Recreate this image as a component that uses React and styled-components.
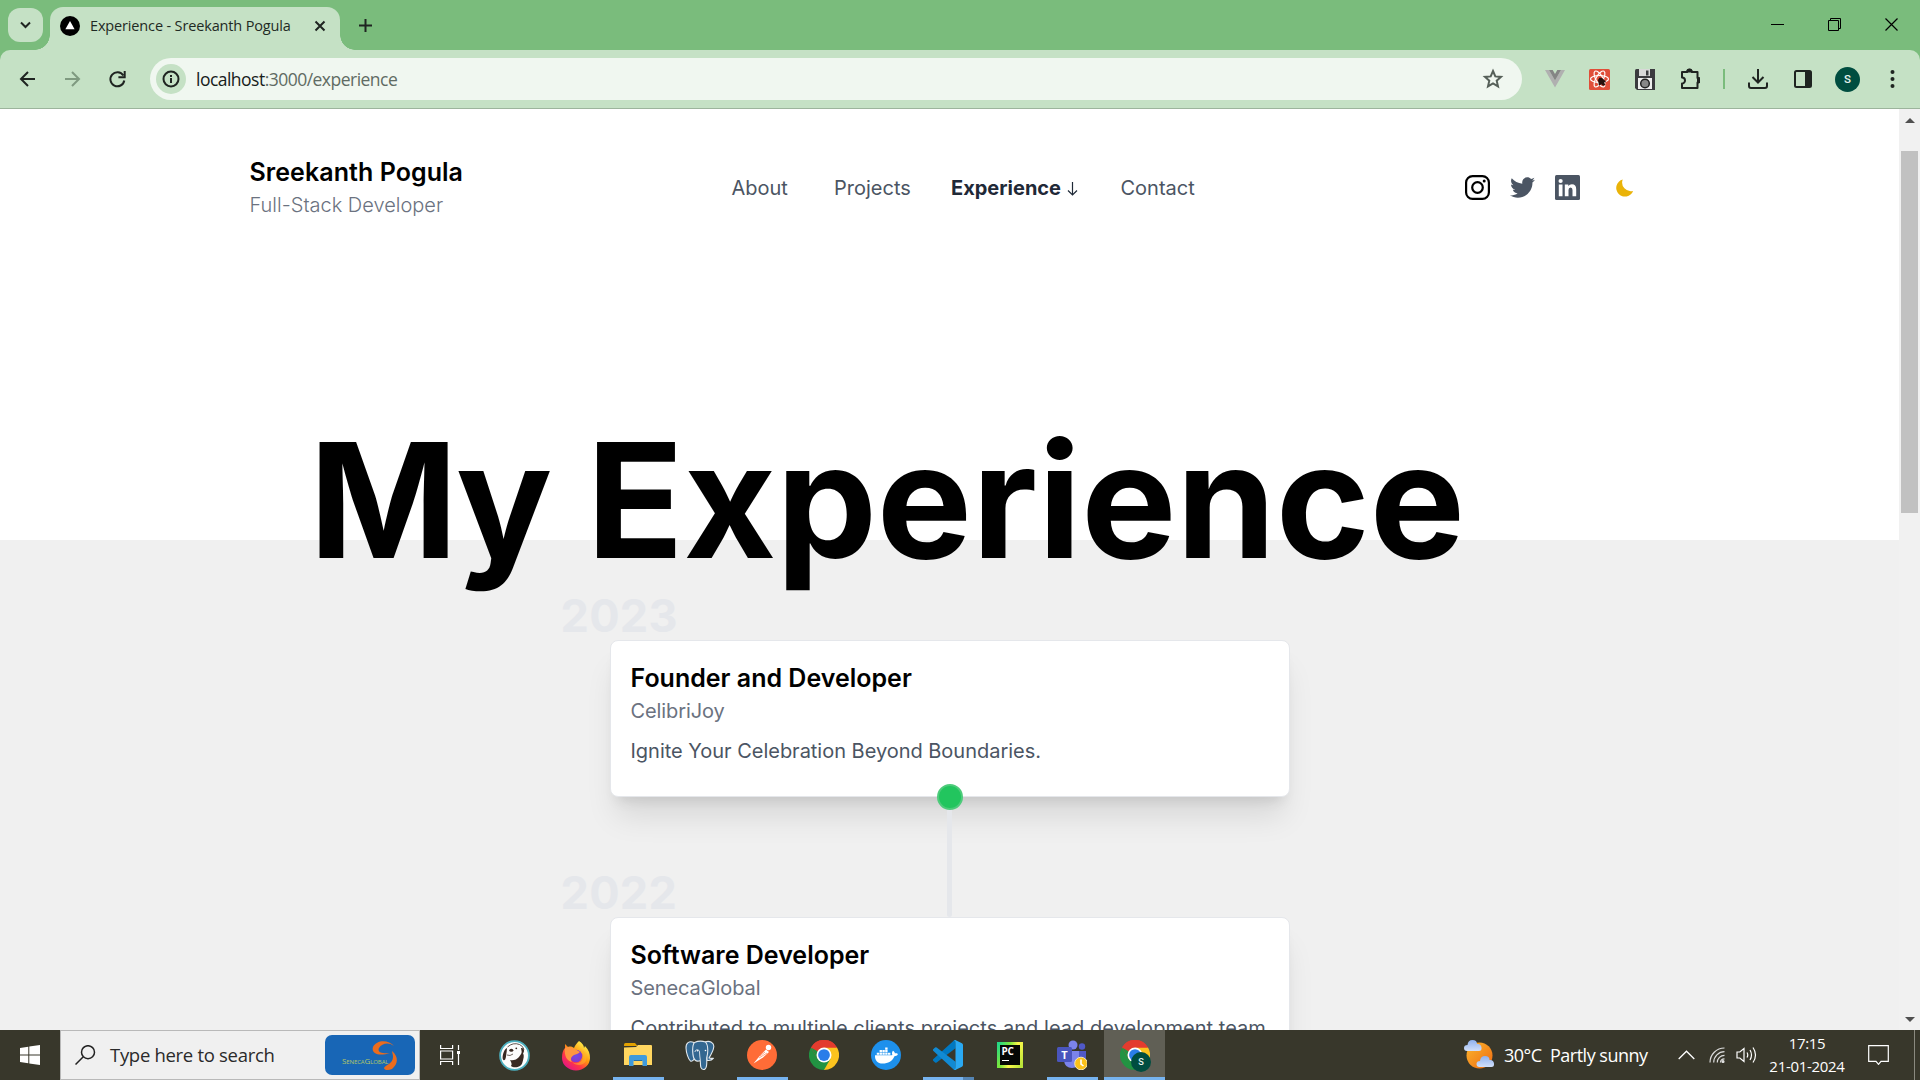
import React from 'react';
import styled, { createGlobalStyle, css } from 'styled-components';
import { FaTwitter, FaDocker } from 'react-icons/fa';

const ui = `"Open Sans", "Noto Sans", sans-serif`;

const Global = createGlobalStyle`
  * { box-sizing: border-box; }
  body { margin: 0; overflow: hidden; }
  h1, h2, h3, p { margin: 0; }
  svg { display: block; flex: none; }
`;

const Screen = styled.div`
  width: 1920px;
  height: 1080px;
  display: grid;
  grid-template-rows: 50px 59px 921px 50px;
  overflow: hidden;
  font-family: Inter, sans-serif;
`;

/* ---------- browser chrome ---------- */
const TabStrip = styled.div`
  display: flex;
  align-items: flex-end;
  background: #7abc7c;
`;
const TabSearch = styled.div`
  width: 35px;
  height: 34px;
  margin: 0 7px 8px 8px;
  border-radius: 12px;
  background: #c5e1c5;
  display: grid;
  place-items: center;
`;
const Tab = styled.div`
  position: relative;
  width: 290px;
  height: 43px;
  padding: 0 14px 6px 10px;
  border-radius: 13px 13px 0 0;
  background: #c5e1c5;
  display: flex;
  align-items: center;
  &::before, &::after {
    content: '';
    position: absolute;
    bottom: 0;
    width: 15px;
    height: 15px;
  }
  &::before { left: -15px; background: radial-gradient(circle at 0 0, transparent 14.5px, #c5e1c5 15px); }
  &::after { right: -15px; background: radial-gradient(circle at 100% 0, transparent 14.5px, #c5e1c5 15px); }
`;
const TabTitle = styled.span`
  flex: 1;
  margin-left: 10px;
  font: 400 14.5px/20px ${ui};
  letter-spacing: -0.15px;
  color: #1f2a24;
  white-space: nowrap;
`;
const NewTab = styled.div`
  margin: 0 auto 18px 19px;
`;
const WindowButtons = styled.div`
  display: flex;
  gap: 44px;
  margin: 0 22px 19px 0;
`;
const ToolbarBack = styled.div`
  background: #7abc7c;
`;
const Toolbar = styled.div`
  height: 59px;
  padding: 0 5px 0 15px;
  border-radius: 10px 10px 0 0;
  border-bottom: 1px solid #9cb49c;
  background: #c5e1c5;
  display: flex;
  align-items: center;
`;
const NavButtons = styled.div`
  width: 135px;
  display: flex;
  gap: 20px;
`;
const Omnibox = styled.div`
  width: 1372px;
  height: 42px;
  padding: 0 17px 0 6px;
  border-radius: 21px;
  background: #f0f7f0;
  display: flex;
  align-items: center;
`;
const InfoBadge = styled.div`
  width: 30px;
  height: 30px;
  border-radius: 50%;
  background: #c5e1c5;
  display: grid;
  place-items: center;
`;
const Url = styled.div`
  flex: 1;
  margin-left: 10px;
  font: 400 17.5px/24px ${ui};
  letter-spacing: -0.52px;
  color: #5f6b63;
  b { font-weight: 400; color: #17201a; }
`;
const Extensions = styled.div`
  display: grid;
  grid-template-columns: repeat(4, 45px) 23px repeat(4, 45px);
  place-items: center;
  margin-left: 10px;
`;
const Divider = styled.i`
  width: 2px;
  height: 20px;
  background: #7abc7c;
`;
const Avatar = styled.div`
  width: ${p => p.$size}px;
  height: ${p => p.$size}px;
  border-radius: 50%;
  background: #004d40;
  color: #e6f2ee;
  font: 500 ${p => p.$size * 0.46}px/${p => p.$size}px Roboto, sans-serif;
  text-align: center;
`;

/* ---------- web page ---------- */
const Viewport = styled.div`
  display: grid;
  grid-template-columns: 1899px 21px;
  overflow: hidden;
`;
const Page = styled.main`
  height: 921px;
  overflow: hidden;
  background: #f0f0f0;
`;
const Hero = styled.section`
  height: 431px;
  background: #fff;
`;
const SiteHeader = styled.header`
  width: 1400px;
  height: 156px;
  margin: 0 auto;
  display: grid;
  grid-template-columns: 482px 1fr auto;
  align-items: center;
`;
const Brand = styled.div`
  padding-top: 1px;
`;
const Name = styled.h2`
  font-size: 25px;
  line-height: 35px;
  font-weight: 600;
  letter-spacing: 0.06px;
  color: #000;
`;
const Role = styled.p`
  font-size: 20px;
  line-height: 30px;
  font-weight: 300;
  color: #6b7280;
`;
const Nav = styled.nav`
  display: grid;
  grid-template-columns: 102.5px 117px 169.5px auto;
  justify-content: start;
  padding-top: 2px;
`;
const NavLink = styled.a`
  display: flex;
  align-items: center;
  gap: 6px;
  font-size: 20px;
  line-height: 30px;
  font-weight: ${p => (p.$active ? 700 : 400)};
  color: ${p => (p.$active ? '#1f2937' : '#4b5563')};
`;
const Socials = styled.div`
  display: flex;
  align-items: center;
  gap: 20px;
  padding-right: 15px;
`;
const Headline = styled.h1`
  margin: 155px 0 0 309px;
  font-size: 160px;
  line-height: 160px;
  font-weight: 700;
  letter-spacing: -0.2px;
  color: #000;
  white-space: nowrap;
`;
const TightWord = styled.span`
  letter-spacing: -3.6px;
`;
const Timeline = styled.section`
  padding-top: 47px;
  width: 680px;
  margin-left: 610px;
`;
const Year = styled.h3`
  height: 53px;
  margin-left: -49.5px;
  font-size: 45px;
  line-height: 57px;
  font-weight: 700;
  letter-spacing: 0.3px;
  color: #e5e7eb;
`;
const Card = styled.article`
  position: relative;
  height: 157px;
  padding: 20px 19.5px;
  border: 1px solid #e5e7eb;
  border-radius: 8px;
  background: #fff;
  box-shadow: 0 25px 31px -6px rgba(0,0,0,.1), 0 10px 12.5px -7px rgba(0,0,0,.1);
`;
const JobTitle = styled.h3`
  font-size: 25px;
  line-height: 35px;
  font-weight: 600;
  color: #000;
`;
const Company = styled.p`
  font-size: 20px;
  line-height: 30px;
  letter-spacing: -0.1px;
  color: #6b7280;
`;
const Summary = styled.p`
  margin-top: 10px;
  font-size: 20px;
  line-height: 30px;
  letter-spacing: ${p => p.$track || 0}px;
  color: #4b5563;
  white-space: nowrap;
`;
const Dot = styled.i`
  position: absolute;
  z-index: 2;
  left: 326px;
  bottom: -14px;
  width: 26px;
  height: 26px;
  border: 2.5px solid #4ecb7b;
  border-radius: 50%;
  background: #22c55e;
`;
const Stem = styled.div`
  position: relative;
  z-index: 1;
  width: 5px;
  height: 120px;
  margin: 0 0 -53px 337px;
  border-radius: 0 0 3px 3px;
  background: #e5e7eb;
`;
const ScrollTrack = styled.div`
  background: #f1f1f1;
  display: flex;
  flex-direction: column;
  align-items: center;
`;
const ScrollArrow = styled.i`
  border: 5px solid transparent;
  ${p => p.$down
    ? css`border-top-color: #505050; border-bottom: 0; margin: auto 0 8px;`
    : css`border-bottom-color: #505050; border-top: 0; margin: 9px 0 28px;`}
`;
const ScrollThumb = styled.div`
  width: 17px;
  height: 362px;
  background: #c1c1c1;
`;

/* ---------- taskbar ---------- */
const Taskbar = styled.div`
  display: flex;
  background: #38372b;
  color: #fff;
`;
const StartButton = styled.div`
  width: 60px;
  display: grid;
  place-items: center;
`;
const SearchBox = styled.div`
  width: 360px;
  padding: 0 4px 0 14px;
  border: 1px solid #b9b9b9;
  background: #f0f0f0;
  display: flex;
  align-items: center;
`;
const SearchText = styled.span`
  flex: 1;
  margin-left: 14px;
  font: 400 18.5px/26px ${ui};
  letter-spacing: -0.3px;
  color: #2a2a2a;
  white-space: nowrap;
`;
const SearchBanner = styled.div`
  width: 90px;
  height: 40px;
  border-radius: 7px;
  background: #1866b6;
  display: flex;
  align-items: center;
`;
const BannerName = styled.span`
  width: 43px;
  margin: 12px -13px 0 17px;
  font: 400 8px/10px ${ui};
  font-variant: small-caps;
  letter-spacing: -0.1px;
  color: #b3c667;
`;
const Apps = styled.div`
  display: flex;
  margin-left: 3px;
`;
const AppSlot = styled.div`
  position: relative;
  width: ${p => p.$w || 62}px;
  height: 50px;
  margin-left: ${p => (p.$active ? 1 : 0)}px;
  display: grid;
  place-items: center;
  background: ${p => (p.$active ? '#605f55' : 'transparent')};
`;
const RunningBar = styled.i`
  position: absolute;
  bottom: 0;
  left: ${p => (p.$full ? 0 : 6)}px;
  right: ${p => (p.$full ? 0 : 5)}px;
  height: 3px;
  background: ${p => (p.$stacked ? 'linear-gradient(90deg, #76b3ef 40px, #5585b4 40px)' : '#76b3ef')};
`;
const ProfileBadge = styled.div`
  position: absolute;
  left: 27px;
  top: 22px;
`;
const Tray = styled.div`
  margin-left: auto;
  display: flex;
  align-items: center;
`;
const Weather = styled.div`
  display: flex;
  align-items: center;
  gap: 9px;
  width: 214px;
  font: 400 18px/26px ${ui};
  letter-spacing: -0.5px;
  white-space: pre;
`;
const TrayIcons = styled.div`
  display: flex;
  align-items: center;
  gap: 11px;
  svg:first-child { margin-right: 3px; }
`;
const Clock = styled.div`
  width: 84px;
  margin: 0 19px 0 8px;
  font: 400 15px/23px ${ui};
  letter-spacing: -0.3px;
  text-align: center;
  white-space: nowrap;
`;
const PeekEdge = styled.i`
  width: 1px;
  height: 50px;
  margin: 0 5px 0 25px;
  background: #8a897f;
`;

const Line = ({ w, h, box, sw = 2, color = '#1f2421', children }) => (
  <svg width={w} height={h} viewBox={box || `0 0 ${w} ${h}`} fill="none" stroke={color} strokeWidth={sw}>{children}</svg>
);

function ChromeLogo() {
  return (
    <svg width="30" height="30" viewBox="0 0 48 48">
      <path d="M24 24 3.2 12A24 24 0 0 1 44.8 12Z" fill="#e33b2e" />
      <path d="M24 24 44.8 12A24 24 0 0 1 24 48Z" fill="#fcc31e" />
      <path d="M24 24 24 48A24 24 0 0 1 3.2 12Z" fill="#229342" />
      <path d="M24 12H44.8L34.4 30Z" fill="#fcc31e" />
      <path d="M34.4 30 24 48 13.6 30Z" fill="#229342" />
      <path d="M3.2 12A24 24 0 0 1 44.8 12H24L13.6 30Z" fill="#e33b2e" />
      <path d="M3.2 12 13.6 30 24 24Z" fill="#229342" />
      <circle cx="24" cy="24" r="12" fill="#fff" />
      <circle cx="24" cy="24" r="9.4" fill="#2a7de9" />
    </svg>
  );
}

function BeaverLogo() {
  return (
    <svg width="31" height="31" viewBox="0 0 31 31">
      <circle cx="15.5" cy="15.5" r="14.4" fill="#fdfdfd" stroke="#4cb0c0" strokeWidth="1.8" />
      <path d="M8 8C5.500 9 4 13 3.600 17c-.2 3 1.200 4 2.600 2.500 1-2 1-5.500 1.500-8 .1-1.300.2-2.500.3-3.500Z" fill="#382923" />
      <path d="M11 20c3 1 7-.5 9-3 1.500-2 2.500-3.500 3-5.500 2 2.500 2.200 5 1.200 8-.8 3-.8 5-3.200 6.500-3.300 2-7.500 1.300-9 0 1.500-2 0-4-1-6Z" fill="#382923" />
      <path d="M8.500 7Q14 2 20.500 4.500q3.500 1.500 4.500 5" fill="none" stroke="#382923" strokeWidth=".8" />
      <path d="M22 8c1.700-.5 3 .8 3 2.500s-.8 3-2 3Z" fill="#382923" />
      <ellipse cx="12.300" cy="10.200" rx="2" ry="1.500" fill="#382923" />
      <circle cx="17.300" cy="8.300" r=".9" fill="#382923" />
      <path d="M8 15q3 1.500 6-1" fill="none" stroke="#382923" strokeWidth=".7" />
    </svg>
  );
}

function ElephantLogo() {
  return (
    <svg width="30" height="31" viewBox="0 0 30 31">
      <g fill="#336791" stroke="#e3e9ee" strokeWidth="1.100" strokeLinejoin="round">
        <path d="M9 2.500C4 .5.800 3 1 8c.2 4.500 2.300 11.500 4.500 13 1.800 1 3.200-1 4.500-3Z" />
        <path d="M20 2c5-2 9 1 8.800 4.500-.2 4-3 8.500-4.800 11.500 1.500.6 3 .4 4.500.2-1.500 2-4 2.600-6.500 2.200Z" />
        <path d="M9.500 2.500Q15 0 20.500 2c2.200 2.500 2.500 8 2 12-.3 2-1 3-.8 5.500.2 3.500.3 10-3.200 10-3.200 0-3-3.500-3.200-9-1.800.8-4 .8-5.300-.5C7.500 17.500 6.500 6 9.500 2.500Z" />
      </g>
      <path d="M10 12c0-3 4.500-3 4.500 0 0 3 .5 5 .8 8" fill="none" stroke="#e3e9ee" strokeWidth=".9" />
      <circle cx="12.500" cy="10.800" r=".8" fill="#fff" /><circle cx="20.500" cy="10.500" r=".8" fill="#fff" />
    </svg>
  );
}

function FirefoxLogo() {
  return (
    <svg width="30" height="31" viewBox="0 0 30 31">
      <defs>
        <linearGradient id="fox" x1=".85" y1=".1" x2=".2" y2=".95"><stop offset="0" stopColor="#fff44f" /><stop offset=".4" stopColor="#ff980e" /><stop offset=".7" stopColor="#ff3647" /><stop offset="1" stopColor="#e31587" /></linearGradient>
        <radialGradient id="globe"><stop offset="0" stopColor="#6f4be8" /><stop offset="1" stopColor="#8b37c9" /></radialGradient>
      </defs>
      <path d="M18 1c3 2 5 4 5 7l1-2c4 4 5 8 5 12a14 12.5 0 0 1-28 0C1 13 2 10 4 8l0-4c1 1 2 2 3 3 2-1 5 0 6 1 1-3 3-5 5-7Z" fill="url(#fox)" />
      <circle cx="15" cy="16" r="6.3" fill="url(#globe)" />
      <path d="M4 8c3-2 7-1 10 1l5 3c-2 2-4 2-6 3-3 2-4 4-2 7-5-1-8-6-7-14Z" fill="#ff9640" />
      <path d="M11 22c5 3 10 0 11-4 1-4-1-7-4-9 6 1 9 6 7 12-3 5-10 5-14 1Z" fill="#ffb22e" opacity=".55" />
    </svg>
  );
}

function ExplorerLogo() {
  return (
    <svg width="28" height="24" viewBox="0 0 28 24">
      <path d="M0 1.5Q0 0 1.500 0H11l2.500 3H0Z" fill="#e2a100" />
      <path d="M0 4.500 12 4l2-2h13q1 0 1 1v19H0Z" fill="#ffd660" />
      <path d="M5 23V14q0-2 2-2h14q2 0 2 2v9h-4.500v-5h-9v5Z" fill="#3f9bdc" />
      <path d="M10 17h8v1h-8Z" fill="#236ea3" />
    </svg>
  );
}

function PostmanLogo() {
  return (
    <svg width="30" height="30" viewBox="0 0 30 30">
      <circle cx="15" cy="15" r="15" fill="#ff6c37" />
      <circle cx="21.500" cy="7.500" r="2.700" fill="#fff" />
      <path d="M19 9.500 22 12 16 17.500 6.500 23.500 13.500 15Z" fill="#fff" />
      <path d="m13 16 5-4M12 18l8-5" stroke="#ff6c37" strokeWidth=".6" />
    </svg>
  );
}

function CodeLogo() {
  return (
    <svg width="30" height="30" viewBox="0 0 24 24">
      <path d="M18.200.2a1.500 1.500 0 0 0-1.700.3L.33 15.260a1 1 0 0 0 0 1.480l1.320 1.200a1 1 0 0 0 1.280.06L18 6.550Z" fill="#0078c1" />
      <path d="M18.200 23.800a1.500 1.500 0 0 1-1.700-.3L.33 8.740a1 1 0 0 1 0-1.480l1.320-1.200a1 1 0 0 1 1.280-.06L18 17.450Z" fill="#118ad3" />
      <path d="M16.500.5q.8-.7 1.700-.3l4.950 2.390q.85.400.85 1.350v16.120q0 .9-.85 1.350l-4.950 2.380q-.9.400-1.700-.3 1.500.6 1.500-1.500V2q0-2-1.500-1.500Z" fill="#2aa9f3" />
    </svg>
  );
}

const PyBox = styled.div`
  width: 26px;
  height: 26px;
  border: 3px solid;
  border-image: linear-gradient(115deg, #21d789, #7ee83a 35%, #fcf84a 60%, #b6e338) 1;
  background: #050805;
  padding: 1px 0 0 1.500px;
  font: 700 10px/11px ${ui};
  letter-spacing: -0.2px;
  color: #fff;
  &::after { content: ''; display: block; width: 7px; height: 1px; margin-top: 3px; background: #fff; }
`;

const TeamsBox = styled.div`
  position: relative;
  width: 30px;
  height: 30px;
`;
const TeamsTile = styled.span`
  position: absolute;
  left: 0;
  top: 7px;
  width: 15px;
  height: 15px;
  border-radius: 1.500px;
  background: #4a55bd;
  font: 700 11px/15px ${ui};
  text-align: center;
`;
function TeamsLogo() {
  return (
    <TeamsBox>
      <svg width="30" height="30" viewBox="0 0 30 30">
        <circle cx="16" cy="5" r="4.500" fill="#7b83eb" />
        <circle cx="25" cy="6.500" r="3.200" fill="#5059c9" />
        <path d="M21 11h8v9q0 4-4 4h-4Z" fill="#5059c9" />
        <path d="M7 11h15v10q0 7-7 7t-8-7Z" fill="#7b83eb" />
        <circle cx="24" cy="23.500" r="6.300" fill="#fbc11a" stroke="#f6e6b2" />
        <path d="M24 19.500v4.500l2.500 2" fill="none" stroke="#fff" strokeWidth="1.600" />
      </svg>
      <TeamsTile>T</TeamsTile>
    </TeamsBox>
  );
}

function WeatherIcon() {
  const cloud = 'M3 11Q0 11 0 8t3.500-3Q4 0 8.500 0T13 4q4-.5 4.500 3.500T14 11Z';
  return (
    <svg width="31" height="30" viewBox="0 0 31 30">
      <defs>
        <linearGradient id="sun" x1="0" x2="1" y1="0" y2="1"><stop offset="0" stopColor="#fbb62d" /><stop offset="1" stopColor="#ee6a12" /></linearGradient>
        <linearGradient id="cl" x1="0" x2="0" y1="0" y2="1"><stop offset="0" stopColor="#8fb1ee" /><stop offset="1" stopColor="#d2e0fa" /></linearGradient>
      </defs>
      <circle cx="15.500" cy="15.500" r="13" fill="url(#sun)" />
      <path d={cloud} fill="url(#cl)" />
      <path d={cloud} fill="url(#cl)" transform="translate(12.500 16)" />
    </svg>
  );
}

const apps = [
  { id: 'dbeaver', icon: <BeaverLogo /> },
  { id: 'firefox', icon: <FirefoxLogo /> },
  { id: 'explorer', icon: <ExplorerLogo />, running: true },
  { id: 'postgres', icon: <ElephantLogo /> },
  { id: 'postman', icon: <PostmanLogo />, running: true },
  { id: 'chrome', icon: <ChromeLogo /> },
  { id: 'docker', icon: <svg width="30" height="30" viewBox="0 0 30 30"><circle cx="15" cy="15" r="15" fill="#1d90ec" /><FaDocker x="4" y="4" size={23} color="#fff" /></svg> },
  { id: 'vscode', icon: <CodeLogo />, running: true, stacked: true },
  { id: 'pycharm', icon: <PyBox>PC</PyBox> },
  { id: 'teams', icon: <TeamsLogo />, running: true },
];

const jobs = [
  { year: '2023', title: 'Founder and Developer', company: 'CelibriJoy', text: 'Ignite Your Celebration Beyond Boundaries.', track: -0.02, linked: true },
  { year: '2022', title: 'Software Developer', company: 'SenecaGlobal', text: 'Contributed to multiple clients projects and lead development team', track: 0.04 },
];

function BrowserChrome() {
  return (
    <>
      <TabStrip>
        <TabSearch><Line w={11} h={8}><path d="m1 1.500 4.500 4.500L10 1.500" /></Line></TabSearch>
        <Tab>
          <svg width="20" height="20" viewBox="0 0 20 20"><circle cx="10" cy="10" r="10" fill="#000" /><path d="M10 5l4.600 8.300H5.400Z" fill="#fff" /></svg>
          <TabTitle>Experience - Sreekanth Pogula</TabTitle>
          <Line w={12} h={12}><path d="m1.500 1.500 9 9m0-9-9 9" /></Line>
        </Tab>
        <NewTab><Line w={13} h={13}><path d="M6.500 0v13M0 6.500h13" /></Line></NewTab>
        <WindowButtons>
          <Line w={13} h={13} sw={1} color="#000"><path d="M0 6.500h13" /></Line>
          <Line w={13} h={13} sw={1} color="#000"><path d="M.5 2.500h10v10H.5ZM2.500 2.500v-2h10v10h-2" /></Line>
          <Line w={13} h={13} sw={1.200} color="#000"><path d="m.5.5 12 12m0-12-12 12" /></Line>
        </WindowButtons>
      </TabStrip>
      <ToolbarBack>
        <Toolbar>
          <NavButtons>
            <Line w={25} h={20}><path d="M20 10H6M13 3l-7 7 7 7" /></Line>
            <Line w={25} h={20} color="#7f9a80"><path d="M5 10h14M12 3l7 7-7 7" /></Line>
            <Line w={25} h={20}><path d="M18.300 6.500A7 7 0 1 0 19.300 11.500M19.700 2v6.300h-6.300" /></Line>
          </NavButtons>
          <Omnibox>
            <InfoBadge><Line w={18} h={18}><circle cx="9" cy="9" r="7.500" /><path d="M9 8v5M9 5v2" /></Line></InfoBadge>
            <Url><b>localhost</b>:3000/experience</Url>
            <Line w={24} h={24} color="#566059" sw={2}><path d="m12 4 2.300 5.400 5.700.5-4.300 3.800 1.300 5.700-5-3-5 3 1.300-5.700L4 9.900l5.700-.5Z" /></Line>
          </Omnibox>
          <Extensions>
            <svg width="20" height="18" viewBox="0 0 20 18"><path d="M0 0h4l6 10.500L16 0h4L10 17.500Z" fill="#b0b0b0" /><path d="M4 0h3.700L10 4l2.300-4H16l-6 10.500Z" fill="#858585" /></svg>
            <svg width="21" height="21" viewBox="0 0 21 21"><rect width="21" height="21" rx="1.500" fill="#e04e39" /><g fill="none" stroke="#fff" strokeWidth="1.200"><ellipse cx="10.500" cy="10" rx="9" ry="3.500" /><ellipse cx="10.500" cy="10" rx="9" ry="3.500" transform="rotate(60 10.500 10)" /><ellipse cx="10.500" cy="10" rx="9" ry="3.500" transform="rotate(-60 10.500 10)" /></g><path d="m9 11 1.500-2.500 2.500.5 3 2.500 1 1.500-2 .5 1.500 2.500-2.500.8-1.500-1.500-2.500 1.500Z" fill="#26100c" /></svg>
            <svg width="20" height="21" viewBox="0 0 20 21"><path d="M0 1.500Q0 0 1.500 0H20v21H2l-2-2Z" fill="#3b3b3f" /><path d="M4 0h11v7H4Z" fill="#d8d8d8" /><path d="M11 1.500h2.500v5H11Z" fill="#3b3b3f" /><path d="M3 9h14v11H3Z" fill="#eee" /><circle cx="10" cy="14.500" r="4.300" fill="#888" stroke="#222" strokeWidth="1.500" /></svg>
            <Line w={21} h={22} box="-1.500 0 21 22"><path d="M2.500 4h4.200a2.300 2.300 0 0 1 4.600 0H17v6a2.300 2.300 0 0 1 0 4.600V20H1.500v-4.500a3 3 0 0 0 0-6V4Z" strokeLinejoin="round" /><path d="M7 3.500a2 2 0 0 1 4 0ZM17.500 10a2 2 0 0 1 0 4Z" fill="#1f2421" /></Line>
            <Divider />
            <Line w={20} h={20}><path d="M10 0v13M4.500 8l5.500 5.500L15.500 8M1 13.500V17q0 2 2 2h14q2 0 2-2v-3.500" /></Line>
            <svg width="18" height="18" viewBox="0 0 18 18"><rect x="1" y="1" width="16" height="16" rx="1.500" fill="none" stroke="#1f2421" strokeWidth="2" /><path d="M11 1h6v16h-6Z" fill="#1f2421" /></svg>
            <Avatar $size={25}>S</Avatar>
            <svg width="25" height="18" viewBox="0 0 25 18" fill="#1f2421"><circle cx="12.500" cy="2" r="2" /><circle cx="12.500" cy="9" r="2" /><circle cx="12.500" cy="16" r="2" /></svg>
          </Extensions>
        </Toolbar>
      </ToolbarBack>
    </>
  );
}

function Portfolio() {
  return (
    <Page>
      <Hero>
        <SiteHeader>
          <Brand>
            <Name>Sreekanth Pogula</Name>
            <Role>Full-Stack Developer</Role>
          </Brand>
          <Nav>
            <NavLink>About</NavLink>
            <NavLink>Projects</NavLink>
            <NavLink $active>Experience<Line w={11} h={15} sw={1.200} color="#1f2937"><path d="M5.500 1v13M1 9.500 5.500 14 10 9.500" /></Line></NavLink>
            <NavLink>Contact</NavLink>
          </Nav>
          <Socials>
            <svg width="25" height="25" viewBox="0 0 25 25" fill="none" stroke="#000" strokeWidth="2.200"><rect x="1.100" y="1.100" width="22.800" height="22.800" rx="6.500" /><circle cx="12.500" cy="12.500" r="5.300" /><circle cx="19.200" cy="5.900" r="1.500" fill="#000" stroke="none" /></svg>
            <FaTwitter size={25} color="#4b5563" />
            <svg width="25" height="25" viewBox="0 0 25 25"><rect width="25" height="25" rx="1.500" fill="#4b5563" /><g fill="#fff"><circle cx="5.600" cy="6" r="2.100" /><path d="M3.800 9.500h3.700v11.700H3.800ZM9.800 9.500h3.500v1.600q1.200-1.900 3.600-1.900 4.300 0 4.300 5v7h-3.700v-6.300q0-2.500-1.900-2.500-2.100 0-2.100 2.600v6.200H9.800Z" /></g></svg>
            <svg width="35" height="22" viewBox="-14.500 -.7 35 22"><path d="M18.600 14.200A8.700 8.700 0 0 1 8.200 2.800a8.700 8.700 0 1 0 10.400 11.400z" fill="#eab308" /></svg>
          </Socials>
        </SiteHeader>
        <Headline><TightWord>My</TightWord> Experience</Headline>
      </Hero>
      <Timeline>
        {jobs.map(j => (
          <React.Fragment key={j.year}>
            <Year>{j.year}</Year>
            <Card>
              <JobTitle>{j.title}</JobTitle>
              <Company>{j.company}</Company>
              <Summary $track={j.track}>{j.text}</Summary>
              {j.linked && <Dot />}
            </Card>
            {j.linked && <Stem />}
          </React.Fragment>
        ))}
      </Timeline>
    </Page>
  );
}

function SystemBar() {
  return (
    <Taskbar>
      <StartButton>
        <svg width="20" height="20" viewBox="0 0 20 20" fill="#fff"><path d="M0 3 8.300 1.800v7.700H0ZM9.300 1.600 20 0v9.500H9.300ZM0 10.500h8.300v7.700L0 17ZM9.300 10.500H20V20L9.300 18.400Z" /></svg>
      </StartButton>
      <SearchBox>
        <Line w={21} h={20} sw={1.500} color="#222"><circle cx="13" cy="7.200" r="6.500" /><path d="m8.300 11.800-7.800 7.700" /></Line>
        <SearchText>Type here to search</SearchText>
        <SearchBanner>
          <BannerName>SenecaGlobal</BannerName>
          <svg width="27" height="31" viewBox="0 0 27 31"><path d="M22 6C17 0 5-1 1 7c-2 6 5 10 17 6-8 1-13-1-11-5C10 3 17 2 22 6Z" fill="#ea6c1e" /><path d="M20 11c7 6 6 13 0 18-4 2-8 1-8-1 1-3 9-4 9-11 0-3-1-4-1-6Z" fill="#ea6c1e" /></svg>
        </SearchBanner>
      </SearchBox>
      <AppSlot $w={60}>
        <svg width="20" height="20" viewBox="0 0 20 20" fill="none" stroke="#fff" strokeWidth="1.200"><path d="M.6 0v3.500h12V0M.6 20v-3.500h12V20M.6 6h12v8H.6ZM18.500 0v5M18.500 9v11" /><path d="M17 6h3v3h-3Z" fill="#fff" stroke="none" /></svg>
      </AppSlot>
      <Apps>
        {apps.map(a => (
          <AppSlot key={a.id}>{a.icon}{a.running && <RunningBar $stacked={a.stacked} />}</AppSlot>
        ))}
        <AppSlot $w={61} $active>
          <ChromeLogo />
          <ProfileBadge><Avatar $size={20}>S</Avatar></ProfileBadge>
          <RunningBar $full />
        </AppSlot>
      </Apps>
      <Tray>
        <Weather><WeatherIcon /><span>30°C  Partly sunny</span></Weather>
        <TrayIcons>
          <Line w={17} h={10} sw={1.300} color="#fff"><path d="m.7 9 7.800-7.800L16.300 9" /></Line>
          <Line w={16} h={16} sw={1.200} color="#ddd"><path d="M1 15.500A14.500 14.500 0 0 1 15.500 1M4.700 15.500A10.800 10.800 0 0 1 15.500 4.700M8.300 15.500A7.200 7.200 0 0 1 15.500 8.300M11.500 15.500q0-3.500 4-3.700" /><circle cx="14" cy="14.500" r="1" fill="#fff" /></Line>
          <Line w={21} h={18} sw={1.200} color="#fff"><path d="M1 6h2.800L8 2.500v13L3.800 12H1ZM11 6.500q1.500 2.500 0 5M14 4q3 5 0 10M17 1.500q5 7.500 0 15" /></Line>
        </TrayIcons>
        <Clock>17:15<br />21-01-2024</Clock>
        <Line w={21} h={20} sw={1.200} color="#fff"><path d="M.7.7h19.600v15.600h-7.300l-2.500 3-2.500-3H.7Z" /></Line>
        <PeekEdge />
      </Tray>
    </Taskbar>
  );
}

export default function App() {
  return (
    <Screen>
      <Global />
      <BrowserChrome />
      <Viewport>
        <Portfolio />
        <ScrollTrack>
          <ScrollArrow />
          <ScrollThumb />
          <ScrollArrow $down />
        </ScrollTrack>
      </Viewport>
      <SystemBar />
    </Screen>
  );
}
